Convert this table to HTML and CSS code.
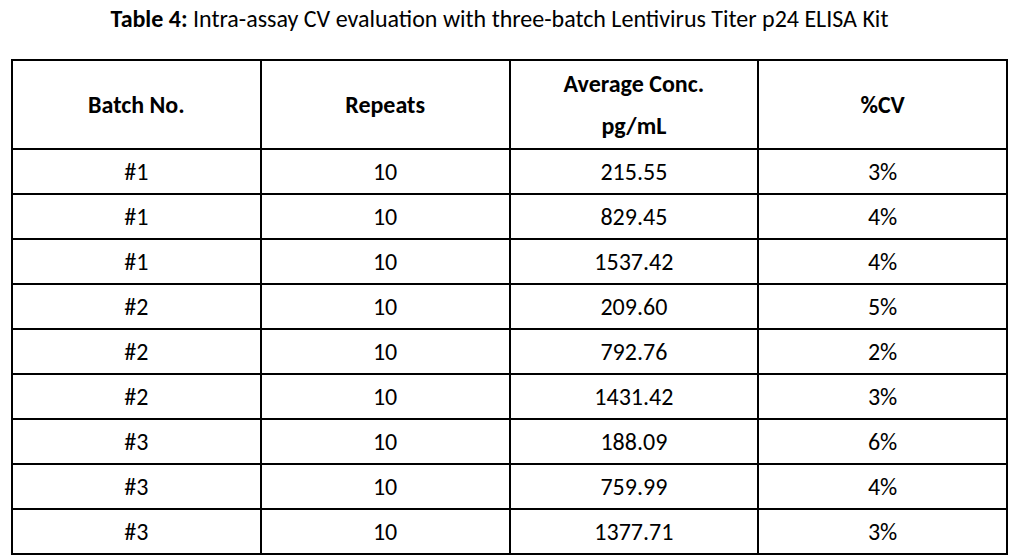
FILE: index.html
```html
<!DOCTYPE html>
<html lang="en">
<head>
<meta charset="utf-8">
<title>Table 4</title>
<link rel="stylesheet" href="styles.css">
</head>
<body>
<div class="page">
  <p class="caption"><b>Table 4:</b> Intra-assay CV evaluation with three-batch Lentivirus Titer p24 ELISA Kit</p>
  <table class="data">
    <thead>
      <tr>
        <th>Batch No.</th>
        <th>Repeats</th>
        <th class="two-line">Average Conc.<br>pg/mL</th>
        <th>%CV</th>
      </tr>
    </thead>
    <tbody>
      <tr><td>#1</td><td>10</td><td>215.55</td><td>3%</td></tr>
      <tr><td>#1</td><td>10</td><td>829.45</td><td>4%</td></tr>
      <tr><td>#1</td><td>10</td><td>1537.42</td><td>4%</td></tr>
      <tr><td>#2</td><td>10</td><td>209.60</td><td>5%</td></tr>
      <tr><td>#2</td><td>10</td><td>792.76</td><td>2%</td></tr>
      <tr><td>#2</td><td>10</td><td>1431.42</td><td>3%</td></tr>
      <tr><td>#3</td><td>10</td><td>188.09</td><td>6%</td></tr>
      <tr><td>#3</td><td>10</td><td>759.99</td><td>4%</td></tr>
      <tr><td>#3</td><td>10</td><td>1377.71</td><td>3%</td></tr>
    </tbody>
  </table>
</div>
</body>
</html>
```

FILE: styles.css
```css
html, body {
  margin: 0;
  padding: 0;
  background: #ffffff;
}

body {
  font-family: Carlito, Lato, "Open Sans", "Liberation Sans", sans-serif;
  font-size: 24px;
  color: #000000;
}

.page {
  padding: 4px 8px 0 11px;
}

.caption {
  margin: 0;
  height: 55px;
  line-height: 30px;
  text-align: center;
  padding-right: 20px;
  white-space: nowrap;
}

.caption b {
  font-weight: 700;
}

.data {
  width: 997px;
  border-collapse: collapse;
  table-layout: fixed;
}

.data th,
.data td {
  border: 2px solid #000000;
  text-align: center;
  vertical-align: middle;
  padding: 0;
}

.data th {
  font-weight: 700;
  height: 87px;
  line-height: 42px;
}

.data td {
  height: 43px;
  line-height: 28px;
}
```
